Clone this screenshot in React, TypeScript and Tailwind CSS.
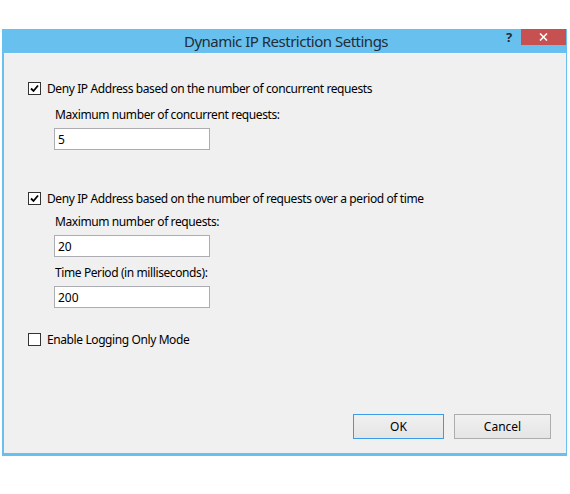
import React, { useState } from "react";

const font = { fontFamily: '"Noto Sans", "Open Sans", sans-serif' };

function Check({ checked, onChange, label }: { checked: boolean; onChange: () => void; label: string }) {
    return (
        <label className="flex items-center h-[13px] cursor-default select-none" onClick={onChange}>
            <span className="w-[13px] h-[13px] border border-[#333333] bg-white flex items-center justify-center shrink-0">
                {checked && (
                    <svg width="9" height="9" viewBox="0 0 9 9">
                        <path d="M1 4.5 L3.5 7 L8 1.5" fill="none" stroke="#000" strokeWidth="1.8" />
                    </svg>
                )}
            </span>
            <span className="ml-[6px] text-[12px] tracking-[-0.4px] text-black leading-none">{label}</span>
        </label>
    );
}

function Field({ label, value, onChange }: { label: string; value: string; onChange: (v: string) => void }) {
    return (
        <div className="flex flex-col pl-[26px]">
            <span className="text-[12px] tracking-[-0.4px] text-black leading-[14px] ml-[1px]">{label}</span>
            <input
                value={value}
                onChange={(e) => onChange(e.target.value)}
                className="mt-[6px] w-[156px] h-[22px] border border-[#abadb3] bg-white px-[3px] text-[12px] text-black outline-none"
            />
        </div>
    );
}

export default function App() {
    const [concurrent, setConcurrent] = useState(true);
    const [overTime, setOverTime] = useState(true);
    const [logging, setLogging] = useState(false);
    const [maxConcurrent, setMaxConcurrent] = useState("5");
    const [maxRequests, setMaxRequests] = useState("20");
    const [period, setPeriod] = useState("200");

    return (
        <div className="w-[570px] h-[494px] bg-white pt-[29px] pl-[2px]" style={font}>
            <div className="w-[565px] h-[427px] bg-[#68c0ef] flex flex-col pl-[2px] pr-[1px] pb-[3px]">
                {/* Title bar */}
                <div className="h-[24px] flex items-start shrink-0">
                    <div className="flex-1 h-full flex items-center justify-center pl-[62px]">
                        <span className="text-[15px] tracking-[-0.5px] text-[#1f2d3a] leading-none">Dynamic IP Restriction Settings</span>
                    </div>
                    <span className="w-[14px] mt-[2px] text-[13px] font-bold text-[#1f2d3a] leading-none">?</span>
                    <button className="w-[45px] h-[16px] ml-[1px] bg-[#c75050] flex items-center justify-center">
                        <svg width="9" height="8" viewBox="0 0 9 8">
                            <path d="M1 0.5 L8 7.5 M8 0.5 L1 7.5" stroke="#fff" strokeWidth="1.6" />
                        </svg>
                    </button>
                </div>

                {/* Body */}
                <div className="flex-1 bg-[#f0f0f0] border-t border-[#f8f8f8] flex flex-col pl-[24px] pt-[28px]">
                    <Check checked={concurrent} onChange={() => setConcurrent(!concurrent)} label="Deny IP Address based on the number of concurrent requests" />
                    <div className="mt-[13px]">
                        <Field label="Maximum number of concurrent requests:" value={maxConcurrent} onChange={setMaxConcurrent} />
                    </div>

                    <div className="mt-[42px]">
                        <Check checked={overTime} onChange={() => setOverTime(!overTime)} label="Deny IP Address based on the number of requests over a period of time" />
                    </div>
                    <div className="mt-[10px]">
                        <Field label="Maximum number of requests:" value={maxRequests} onChange={setMaxRequests} />
                    </div>
                    <div className="mt-[9px]">
                        <Field label="Time Period (in milliseconds):" value={period} onChange={setPeriod} />
                    </div>

                    <div className="mt-[25px]">
                        <Check checked={logging} onChange={() => setLogging(!logging)} label="Enable Logging Only Mode" />
                    </div>

                    <div className="mt-auto mb-[14px] flex justify-end gap-[10px] pr-[15px]">
                        <button className="w-[91px] h-[25px] border border-[#3c9be8] bg-gradient-to-b from-[#f0f0f0] to-[#e5e5e5] text-[12px] text-black">
                            OK
                        </button>
                        <button className="w-[97px] h-[25px] border border-[#adadad] bg-gradient-to-b from-[#f0f0f0] to-[#e5e5e5] text-[12px] text-black">
                            Cancel
                        </button>
                    </div>
                </div>
            </div>
        </div>
    );
}
